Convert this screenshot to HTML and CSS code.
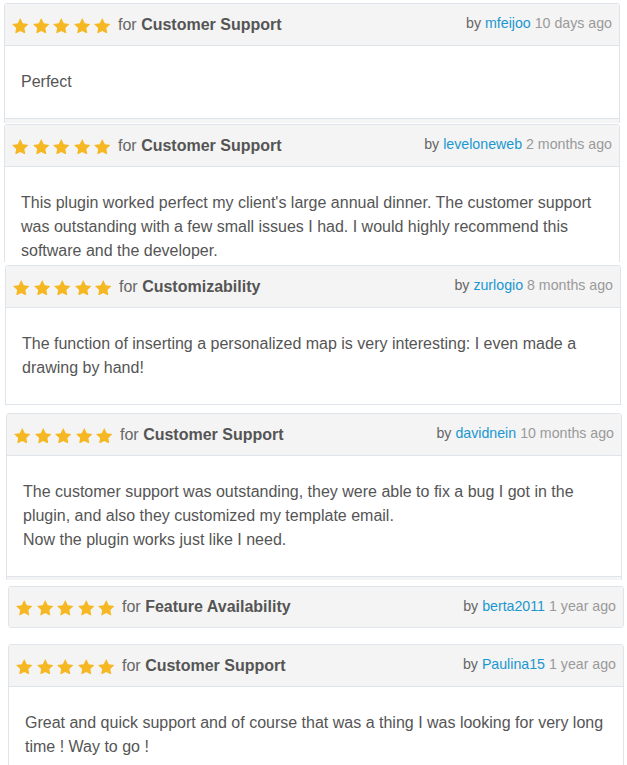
FILE: index.html
```html
<!DOCTYPE html>
<html lang="en">
<head>
    <meta charset="UTF-8">
    <meta name="viewport" content="width=device-width, initial-scale=1.0">
    <title>Reviews</title>
    <link rel="stylesheet" href="styles.css">
</head>
<body>
    <svg width="0" height="0" class="defs">
        <symbol id="star" viewBox="2 2 20 19.2">
            <path d="M12 2l3.09 6.26L22 9.27l-5 4.87 1.18 6.88L12 17.77l-6.18 3.25L7 14.14 2 9.27l6.91-1.01L12 2z"/>
        </symbol>
    </svg>

    <div class="reviews">
        <div class="shot shot-1">
            <div class="review">
                <div class="review-head">
                    <div class="rating">
                        <svg class="star"><use href="#star"/></svg>
                        <svg class="star"><use href="#star"/></svg>
                        <svg class="star"><use href="#star"/></svg>
                        <svg class="star"><use href="#star"/></svg>
                        <svg class="star"><use href="#star"/></svg>
                        <span class="for">for <b>Customer Support</b></span>
                    </div>
                    <div class="meta">by <a href="#">mfeijoo</a> <span class="date">10 days ago</span></div>
                </div>
                <div class="review-body">
                    <p>Perfect</p>
                </div>
                <div class="review-foot"></div>
            </div>
        </div>

        <div class="shot shot-2">
            <div class="review">
                <div class="review-head">
                    <div class="rating">
                        <svg class="star"><use href="#star"/></svg>
                        <svg class="star"><use href="#star"/></svg>
                        <svg class="star"><use href="#star"/></svg>
                        <svg class="star"><use href="#star"/></svg>
                        <svg class="star"><use href="#star"/></svg>
                        <span class="for">for <b>Customer Support</b></span>
                    </div>
                    <div class="meta">by <a href="#">leveloneweb</a> <span class="date">2 months ago</span></div>
                </div>
                <div class="review-body">
                    <p>This plugin worked perfect my client's large annual dinner. The customer support was outstanding with a few small issues I had. I would highly recommend this software and the developer.</p>
                </div>
                <div class="review-foot"></div>
            </div>
        </div>

        <div class="shot shot-3">
            <div class="review">
                <div class="review-head">
                    <div class="rating">
                        <svg class="star"><use href="#star"/></svg>
                        <svg class="star"><use href="#star"/></svg>
                        <svg class="star"><use href="#star"/></svg>
                        <svg class="star"><use href="#star"/></svg>
                        <svg class="star"><use href="#star"/></svg>
                        <span class="for">for <b>Customizability</b></span>
                    </div>
                    <div class="meta">by <a href="#">zurlogio</a> <span class="date">8 months ago</span></div>
                </div>
                <div class="review-body">
                    <p>The function of inserting a personalized map is very interesting: I even made a drawing by hand!</p>
                </div>
                <div class="review-foot"></div>
            </div>
        </div>

        <div class="shot shot-4">
            <div class="review">
                <div class="review-head">
                    <div class="rating">
                        <svg class="star"><use href="#star"/></svg>
                        <svg class="star"><use href="#star"/></svg>
                        <svg class="star"><use href="#star"/></svg>
                        <svg class="star"><use href="#star"/></svg>
                        <svg class="star"><use href="#star"/></svg>
                        <span class="for">for <b>Customer Support</b></span>
                    </div>
                    <div class="meta">by <a href="#">davidnein</a> <span class="date">10 months ago</span></div>
                </div>
                <div class="review-body">
                    <p>The customer support was outstanding, they were able to fix a bug I got in the plugin, and also they customized my template email.<br>Now the plugin works just like I need.</p>
                </div>
                <div class="review-foot"></div>
            </div>
        </div>

        <div class="shot shot-5">
            <div class="review">
                <div class="review-head">
                    <div class="rating">
                        <svg class="star"><use href="#star"/></svg>
                        <svg class="star"><use href="#star"/></svg>
                        <svg class="star"><use href="#star"/></svg>
                        <svg class="star"><use href="#star"/></svg>
                        <svg class="star"><use href="#star"/></svg>
                        <span class="for">for <b>Feature Availability</b></span>
                    </div>
                    <div class="meta">by <a href="#">berta2011</a> <span class="date">1 year ago</span></div>
                </div>
            </div>
        </div>

        <div class="shot shot-6">
            <div class="review">
                <div class="review-head">
                    <div class="rating">
                        <svg class="star"><use href="#star"/></svg>
                        <svg class="star"><use href="#star"/></svg>
                        <svg class="star"><use href="#star"/></svg>
                        <svg class="star"><use href="#star"/></svg>
                        <svg class="star"><use href="#star"/></svg>
                        <span class="for">for <b>Customer Support</b></span>
                    </div>
                    <div class="meta">by <a href="#">Paulina15</a> <span class="date">1 year ago</span></div>
                </div>
                <div class="review-body">
                    <p>Great and quick support and of course that was a thing I was looking for very long time ! Way to go !</p>
                </div>
                <div class="review-foot"></div>
            </div>
        </div>
    </div>
</body>
</html>
```

FILE: styles.css
```css
body {
    margin: 0;
    background: #fff;
    font-family: "Liberation Sans", Arial, sans-serif;
    font-size: 16px;
    color: #555;
    overflow: hidden;
}
.defs {
    position: absolute;
}
.reviews {
    display: flex;
    flex-direction: column;
}
.shot {
    overflow: hidden;
}
.shot-1 {
    height: 120px;
    margin: 3px 0 1px 4px;
}
.shot-2 {
    height: 138px;
    margin-left: 4px;
}
.shot-3 {
    height: 140px;
    margin: 3px 0 0 5px;
}
.shot-4 {
    height: 167px;
    margin: 8px 0 0 6px;
}
.shot-5 {
    margin: 6px 0 0 8px;
}
.shot-6 {
    margin: 16px 0 0 8px;
}
.review {
    width: 614px;
    border: 1px solid #dfe4ea;
    border-radius: 3px;
    background: #fff;
}
.review-head {
    display: flex;
    align-items: center;
    justify-content: space-between;
    height: 41px;
    padding: 0 7px;
    background: #f4f4f4;
    border-bottom: 1px solid #dfe4ea;
    border-radius: 3px 3px 0 0;
}
.review-head:last-child {
    border-bottom: none;
    height: 40px;
    border-radius: 3px;
}
.rating {
    display: flex;
    align-items: center;
}
.star {
    width: 16.5px;
    height: 15.8px;
    margin-right: 4px;
    fill: #f5b823;
    position: relative;
    top: 1px;
}
.for {
    margin-left: 3.5px;
    color: #666;
}
.for b {
    color: #555;
}
.meta {
    font-size: 14.2px;
    color: #666;
    margin-bottom: 3px;
}
.meta a {
    color: #1a97d0;
    text-decoration: none;
}
.date {
    color: #9a9a9a;
}
.review-body {
    padding: 24px 16px;
}
.review-body p {
    margin: 0;
    line-height: 24px;
}
.review-foot {
    height: 20px;
    background: #f4f4f4;
    border-top: 1px solid #dfe4ea;
}
```
